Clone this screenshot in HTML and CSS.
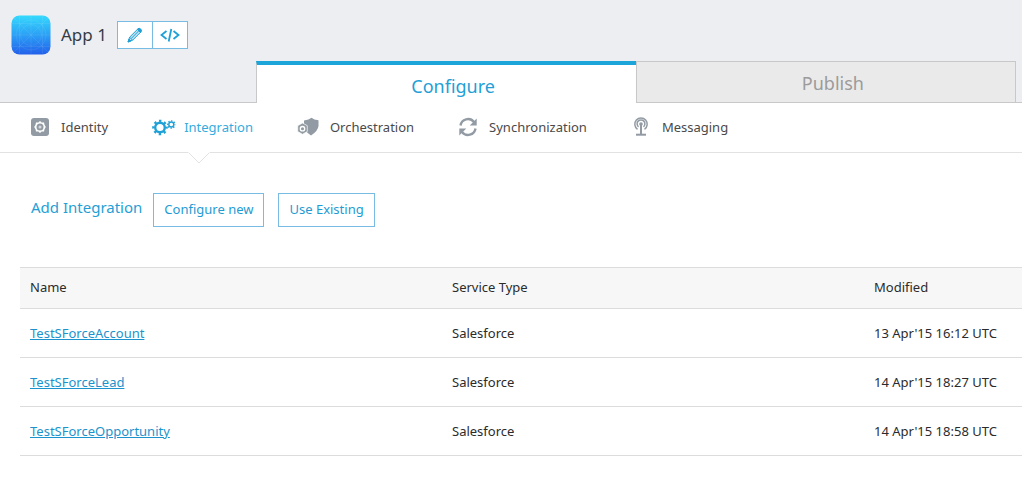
FILE: index.html
```html
<!DOCTYPE html>
<html lang="en">
<head>
<meta charset="utf-8">
<meta name="viewport" content="width=device-width, initial-scale=1">
<title>App 1 – Integration</title>
<link rel="stylesheet" href="styles.css">
</head>
<body>
<header class="header">
  <div class="app">
    <svg class="app-icon" viewBox="0 0 40 40" aria-hidden="true">
      <defs><linearGradient id="sky" x1="0" y1="0" x2="0" y2="1"><stop offset="0" stop-color="#34d9fd"/><stop offset=".5" stop-color="#2ba0f5"/><stop offset="1" stop-color="#2260ea"/></linearGradient></defs>
      <rect x=".5" y=".5" width="39" height="39" rx="8" fill="url(#sky)"/>
      <g fill="none" stroke="#fff" stroke-opacity=".14" stroke-width=".5">
        <path d="M3 3l34 34M37 3L3 37M20 1v38M1 20h38M8.500 1v38M31.500 1v38M1 8.500h38M1 31.500h38"/>
        <circle cx="20" cy="20" r="15"/><circle cx="20" cy="20" r="10.500"/>
      </g>
    </svg>
    <h1 class="app-name">App 1</h1>
    <div class="tools">
      <button class="tool" type="button" aria-label="Edit">
        <svg class="tool-icon" viewBox="0 0 16 16" fill="none" stroke="#1fa0d6" stroke-linejoin="round" aria-hidden="true">
          <path fill="#bfe3f4" d="M1 15l1.600-4.800L11 1.800q1.400-.9 2.600.3t.4 2.700L5.600 13.200z"/><path d="M2.600 10.200l3 3M4.200 11.500L11.600 4"/><path fill="#1fa0d6" d="M1 15l1-2.900 1.900 1.900z"/><path fill="#1fa0d6" d="M11 1.800q1.400-.9 2.600.3t.4 2.700l-.6.600-3-3z"/>
        </svg>
      </button>
      <button class="tool" type="button" aria-label="View code">
        <svg class="code-icon" viewBox="0 0 20 16" fill="none" stroke="#1fa0d6" stroke-width="1.800" aria-hidden="true"><path d="M6.500 4L1.500 8l5 4M13.500 4l5 4-5 4M11.300 2L8.700 14.500"/></svg>
      </button>
    </div>
  </div>
  <nav class="tabs" aria-label="Stage">
    <a class="tab tab-active" href="#configure" aria-current="page">Configure</a>
    <a class="tab" href="#publish">Publish</a>
  </nav>
</header>
<nav class="subnav" aria-label="Configure sections">
  <a class="item" href="#identity">
    <svg class="icon" viewBox="0 0 20 20" aria-hidden="true"><rect x="1" y="1" width="18" height="18" rx="3" fill="#929ba4"/><path d="M10 4l1.700 1.400 2.300.1.500 2.300L15.800 10l-1.300 2.200-.5 2.300-2.300.1L10 16l-1.700-1.400-2.300-.1-.5-2.300L4.200 10l1.300-2.200.5-2.300 2.300-.1z" fill="#fff"/><circle cx="10" cy="10" r="3.500" fill="#929ba4"/><circle cx="10" cy="10" r="1.500" fill="#d5d9dc"/></svg>
    Identity
  </a>
  <a class="item item-active" href="#integration" aria-current="page">
    <svg class="icon gears" viewBox="0 0 24 20" fill="none" stroke="#1fa0d6" aria-hidden="true"><circle cx="8" cy="10.500" r="4.800" stroke-width="2.400"/><circle cx="8" cy="10.500" r="6.700" stroke-width="2.200" stroke-dasharray="2.400 2.862" stroke-dashoffset="1.200"/><circle cx="19.300" cy="7.500" r="2.500" stroke-width="1.400"/><circle cx="19.300" cy="7.500" r="3.700" stroke-width="1.200" stroke-dasharray="1.400 1.506" stroke-dashoffset=".7"/></svg>
    Integration
    <svg class="notch" viewBox="0 0 22 12" aria-hidden="true"><path d="M0 0h22l-1 1-10 10L1 1z" fill="#fff"/><path d="M1 1l10 10L21 1" fill="none" stroke="#e2e2e2"/></svg>
  </a>
  <a class="item" href="#orchestration">
    <svg class="icon wide" viewBox="0 0 22 20" aria-hidden="true"><path d="M7 3.500Q12 3 14.500.8 17 3 21.500 3.200V9q-.5 5-7.500 9.500Q7 14 7 9z" fill="#929ba4"/><path d="M5.500 6l4.800 2.700v5.800l-4.800 2.800-4.800-2.800V8.700z" fill="#929ba4" stroke="#fff" stroke-width=".7"/><circle cx="5.500" cy="11.700" r="2.200" fill="#929ba4" stroke="#fff" stroke-width="1.300"/></svg>
    Orchestration
  </a>
  <a class="item" href="#synchronization">
    <svg class="icon" viewBox="0 0 20 20" fill="none" stroke="#929ba4" stroke-width="2.400" aria-hidden="true"><path d="M2.500 8.500A7.600 7.600 0 0 1 16 5M17.500 11.500A7.600 7.600 0 0 1 4 15"/><path d="M18.700 1.500v7h-7zM1.300 18.500v-7h7z" fill="#929ba4" stroke="none"/></svg>
    Synchronization
  </a>
  <a class="item" href="#messaging">
    <svg class="icon" viewBox="-3 0 20 20" fill="none" stroke="#929ba4" stroke-width="1.500" aria-hidden="true"><path d="M3.500 12.300A6.200 6.200 0 1 1 10.500 12.300M4.500 9.800A3.900 3.900 0 1 1 9.500 9.800"/><circle cx="7" cy="7" r="1.800" fill="#929ba4" stroke="none"/><path d="M7 7v10" stroke-width="2"/><path d="M2 17.700h10" stroke-width="2"/></svg>
    Messaging
  </a>
</nav>
<main class="content">
  <section class="add">
    <h2 class="add-title">Add Integration</h2>
    <button class="button" type="button">Configure new</button>
    <button class="button" type="button">Use Existing</button>
  </section>
  <table class="services">
    <thead><tr><th scope="col">Name</th><th scope="col">Service Type</th><th scope="col" class="modified">Modified</th></tr></thead>
    <tbody>
      <tr><td><a class="link" href="#account">TestSForceAccount</a></td><td>Salesforce</td><td>13 Apr'15 16:12 UTC</td></tr>
      <tr><td><a class="link" href="#lead">TestSForceLead</a></td><td>Salesforce</td><td>14 Apr'15 18:27 UTC</td></tr>
      <tr><td><a class="link" href="#opportunity">TestSForceOpportunity</a></td><td>Salesforce</td><td>14 Apr'15 18:58 UTC</td></tr>
    </tbody>
  </table>
</main>
</body>
</html>
```
FILE: styles.css
```css
* { box-sizing: border-box; }
body { margin: 0; background: #fff; color: #2b2b2b; font: 13px/20px "Noto Sans", "Open Sans", sans-serif; }
svg { display: block; flex: none; }
a { text-decoration: none; }

.header { background: #edeef2; box-shadow: inset 0 -1px #c8c8c8; }
.app { display: flex; align-items: center; height: 61px; padding: 8px 11px 0; }
.app-icon { width: 40px; height: 40px; }
.app-name { margin: 0 10px; font-size: 17px; line-height: 24px; font-weight: 400; color: #333c44; }
.tools { display: flex; }
.tool { display: grid; place-items: center; width: 36px; height: 28px; padding: 0; border: 1px solid #78bce3; background: #fff; }
.tool + .tool { margin-left: -1px; }
.tool-icon { width: 16px; height: 16px; }
.code-icon { width: 20px; height: 16px; }

.tabs { display: grid; grid-template-columns: 1fr 1fr; margin: 0 6px 0 25%; }
.tab { height: 42px; padding-left: 14px; border: 1px solid #c8c8c8; background: #eaeaea; color: #9b9b9b; font-size: 18px; line-height: 42px; text-align: center; }
.tab-active { border-width: 4px 0 0 1px; border-top-color: #1ba5d9; background: #fff; color: #1fa0d6; }

.subnav { display: flex; height: 50px; padding: 0 30px; gap: 44px; border-bottom: 1px solid #e2e2e2; }
.item { position: relative; display: flex; align-items: center; gap: 11px; padding-bottom: 2px; color: #4a4a4a; }
.item-active { gap: 8px; color: #33ace0; }
.icon { width: 20px; height: 20px; }
.gears { width: 24px; }
.wide { width: 22px; }
.notch { position: absolute; left: 36px; bottom: -12px; width: 22px; height: 12px; }

.content { padding: 40px 0 22px 20px; }
.add { display: flex; align-items: flex-start; padding-left: 11px; }
.add-title { margin: 2px 11px 0 0; font-size: 15px; line-height: 24px; font-weight: 400; color: #1fa0d6; }
.button { height: 34px; margin-right: 14px; padding: 0 10px 2px; border: 1px solid #78bce3; background: #fff; color: #1f9bd3; font: inherit; }
.services { width: 100%; margin-top: 40px; border-collapse: collapse; table-layout: fixed; }
.services th, .services td { height: 49px; padding: 0 10px; border-bottom: 1px solid #dcdcdc; text-align: left; font-weight: 400; white-space: nowrap; }
.services th { height: 41px; padding-bottom: 2px; border-top: 1px solid #dcdcdc; background: #f7f7f7; }
.services .modified { width: 158px; }
.link { color: #1c93cc; text-decoration: underline; }
```
